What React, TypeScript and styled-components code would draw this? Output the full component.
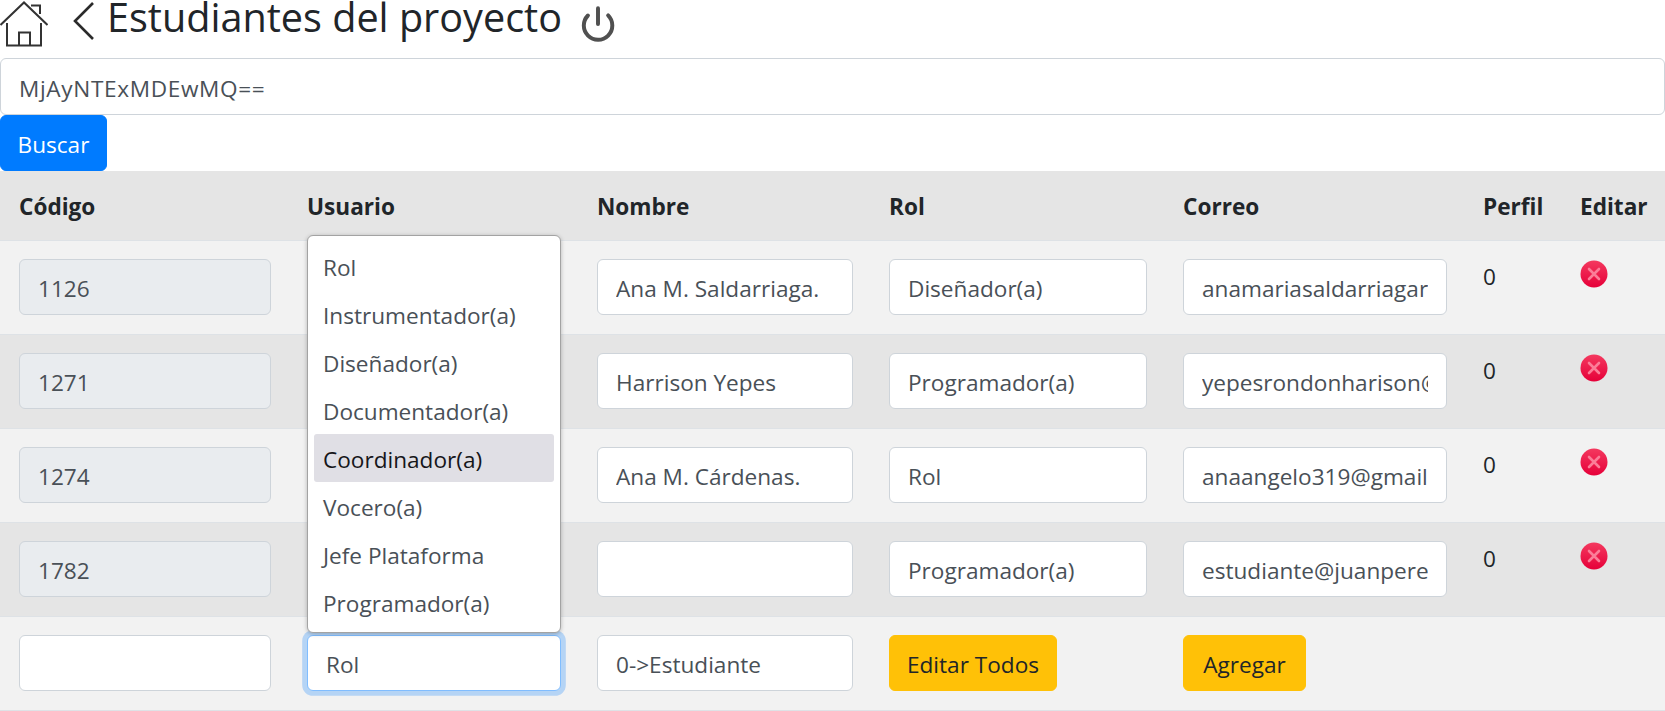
import React from 'react';
import styled, { createGlobalStyle } from 'styled-components';
import { Power } from 'lucide-react';

const GlobalStyle = createGlobalStyle`
  html, body {
    margin: 0;
    background: #fff;
    color: #212529;
    font-family: "Open Sans", "Noto Sans", sans-serif;
    font-size: 22.6px;
    line-height: 36px;
    overflow: hidden;
  }
  * { box-sizing: border-box; }
`;

const TitleBar = styled.header`
  display: flex;
  align-items: flex-start;
  height: 58.4px;
`;

const HomeIcon = styled.svg`
  width: 48px;
  height: 46px;
  margin: 1px 25px 0 0;
  flex: none;
`;

const BackIcon = styled.svg`
  width: 21px;
  height: 38px;
  margin: 2px 13px 0 0;
  flex: none;
`;

const Title = styled.h1`
  margin: 0 17px 0 0;
  font-size: 39.6px;
  font-weight: 400;
  line-height: 34px;
  white-space: nowrap;
`;

const PowerIcon = styled(Power)`
  flex: none;
  margin-top: 5px;
  color: #505050;
`;

const Control = styled.input`
  display: block;
  width: 100%;
  height: 56.5px;
  padding: 3px 18px 0;
  border: 1px solid #ced4da;
  border-radius: 6px;
  background: ${(p) => (p.readOnly ? '#e9ecef' : '#fff')};
  color: #495057;
  font: inherit;
  outline: none;
`;

const SearchInput = styled(Control)`
  letter-spacing: 0.65px;
`;

const SelectBox = styled.div`
  position: relative;
`;

const RolSelect = styled.select`
  display: block;
  width: 100%;
  height: 56.5px;
  padding: 3px 18px 0;
  border: 1px solid #80bdff;
  border-radius: 6px;
  background: #fff;
  color: #495057;
  font: inherit;
  appearance: none;
  outline: none;
  box-shadow: 0 0 0 4.8px rgba(0, 123, 255, 0.25);
`;

const Menu = styled.ul`
  position: absolute;
  left: 0;
  right: 0;
  bottom: calc(100% + 1.5px);
  margin: 0;
  padding: 6px;
  list-style: none;
  background: #fff;
  border: 1px solid #a3a3a3;
  border-radius: 6px;
  box-shadow: 0 1px 4px rgba(0, 0, 0, 0.25);
  z-index: 2;
`;

const MenuItem = styled.li<{ $active?: boolean }>`
  height: 48px;
  padding: 0 9px;
  line-height: 51px;
  border-radius: 3px;
  white-space: nowrap;
  color: ${(p) => (p.$active ? '#16161a' : '#495057')};
  background: ${(p) => (p.$active ? '#e0dfe5' : 'transparent')};
`;

const Button = styled.button<{ $variant: 'primary' | 'warning'; $width: number }>`
  display: inline-block;
  width: ${(p) => p.$width}px;
  height: 56.5px;
  padding: 3px 0 0;
  border: 1px solid ${(p) => (p.$variant === 'primary' ? '#007bff' : '#ffc107')};
  border-radius: 6px;
  background: ${(p) => (p.$variant === 'primary' ? '#007bff' : '#ffc107')};
  color: ${(p) => (p.$variant === 'primary' ? '#fff' : '#212529')};
  font: inherit;
  text-align: center;
  vertical-align: top;
`;

const Table = styled.table`
  width: 1665px;
  table-layout: fixed;
  border-collapse: collapse;
`;

const Row = styled.tr<{ $shade: 'light' | 'dark' }>`
  background: ${(p) => (p.$shade === 'light' ? '#f2f2f2' : '#e5e5e5')};
`;

const HeadCell = styled.th`
  height: 69px;
  padding: 3px 0 0 18px;
  font-weight: 700;
  text-align: left;
  vertical-align: middle;
  border-bottom: 1px solid #dee2e6;
  white-space: nowrap;

  &:first-child {
    padding-left: 19px;
  }
`;

const Cell = styled.td`
  height: 94px;
  padding: 18px;
  vertical-align: top;
  border-top: 1px solid #dee2e6;
  border-bottom: 1px solid #dee2e6;
  line-height: 35px;

  &:first-child {
    padding-left: 19px;
  }
`;

const DeleteIcon = styled.svg`
  display: block;
  width: 28px;
  height: 28px;
  margin-top: 1px;
`;

const columns = [289, 290, 292, 294, 300, 97, 103];
const headers = ['Código', 'Usuario', 'Nombre', 'Rol', 'Correo', 'Perfil', 'Editar'];
const roles = [
  'Rol',
  'Instrumentador(a)',
  'Diseñador(a)',
  'Documentador(a)',
  'Coordinador(a)',
  'Vocero(a)',
  'Jefe Plataforma',
  'Programador(a)',
];
const students = [
  { code: '1126', name: 'Ana M. Saldarriaga.', rol: 'Diseñador(a)', mail: 'anamariasaldarriagarangel@gmail.com' },
  { code: '1271', name: 'Harrison Yepes', rol: 'Programador(a)', mail: 'yepesrondonharison@gmail.com' },
  { code: '1274', name: 'Ana M. Cárdenas.', rol: 'Rol', mail: 'anaangelo319@gmail.com' },
  { code: '1782', name: '', rol: 'Programador(a)', mail: 'estudiante@juanperez.com' },
];

function Delete() {
  return (
    <DeleteIcon viewBox="0 0 28 28">
      <defs>
        <linearGradient id="deleteFill" x1="0" y1="0" x2="0" y2="1">
          <stop offset="0" stopColor="#f4395f" />
          <stop offset="1" stopColor="#e60039" />
        </linearGradient>
      </defs>
      <circle cx="14" cy="14" r="13.5" fill="url(#deleteFill)" />
      <path d="M9 9l10 10M19 9L9 19" stroke="#fb7d98" strokeWidth="2.6" strokeLinecap="round" />
    </DeleteIcon>
  );
}

export default function App() {
  return (
    <>
      <GlobalStyle />
      <TitleBar>
        <HomeIcon viewBox="0 0 48 46" fill="none" stroke="#333" strokeWidth="2">
          <path d="M0.5 24L24 1.5L47.5 24" />
          <path d="M31 4.5H40V13" />
          <path d="M7 22V44.5H41V22" />
          <path d="M19 44.5V31.5H30V44.5" />
        </HomeIcon>
        <BackIcon viewBox="0 0 21 38" fill="none" stroke="#2b2b2b" strokeWidth="2.6">
          <path d="M20 1L2 19L20 37" />
        </BackIcon>
        <Title>Estudiantes del proyecto</Title>
        <PowerIcon size={38} strokeWidth={2.5} />
      </TitleBar>
      <SearchInput defaultValue="MjAyNTExMDEwMQ==" />
      <Button $variant="primary" $width={107}>
        Buscar
      </Button>
      <Table>
        <colgroup>
          {columns.map((w, i) => (
            <col key={i} width={w} />
          ))}
        </colgroup>
        <thead>
          <Row $shade="dark">
            {headers.map((h) => (
              <HeadCell key={h}>{h}</HeadCell>
            ))}
          </Row>
        </thead>
        <tbody>
          {students.map((s, i) => (
            <Row key={s.code} $shade={i % 2 === 0 ? 'light' : 'dark'}>
              <Cell>
                <Control readOnly defaultValue={s.code} />
              </Cell>
              <Cell />
              <Cell>
                <Control defaultValue={s.name} />
              </Cell>
              <Cell>
                <Control defaultValue={s.rol} />
              </Cell>
              <Cell>
                <Control defaultValue={s.mail} />
              </Cell>
              <Cell>0</Cell>
              <Cell>
                <Delete />
              </Cell>
            </Row>
          ))}
          <Row $shade="light">
            <Cell>
              <Control defaultValue="" />
            </Cell>
            <Cell>
              <SelectBox>
                <Menu>
                  {roles.map((r) => (
                    <MenuItem key={r} $active={r === 'Coordinador(a)'}>
                      {r}
                    </MenuItem>
                  ))}
                </Menu>
                <RolSelect defaultValue="Rol">
                  {roles.map((r) => (
                    <option key={r}>{r}</option>
                  ))}
                </RolSelect>
              </SelectBox>
            </Cell>
            <Cell>
              <Control defaultValue="0->Estudiante" />
            </Cell>
            <Cell>
              <Button $variant="warning" $width={168}>
                Editar Todos
              </Button>
            </Cell>
            <Cell>
              <Button $variant="warning" $width={123}>
                Agregar
              </Button>
            </Cell>
            <Cell />
            <Cell />
          </Row>
        </tbody>
      </Table>
    </>
  );
}
